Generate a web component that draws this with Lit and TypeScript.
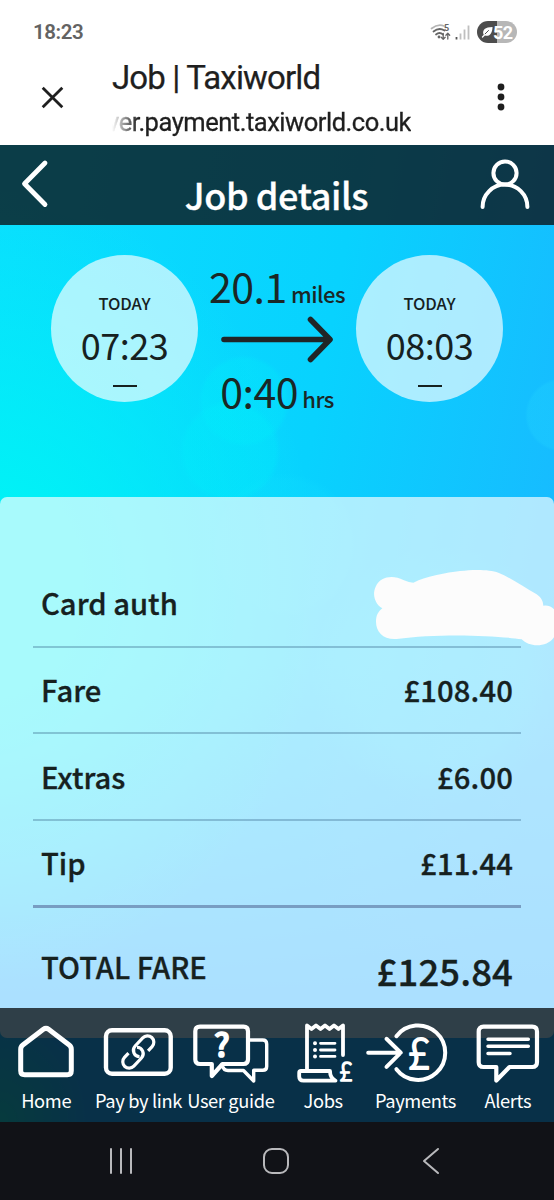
import { LitElement, html, css, svg } from "lit";
import { customElement } from "lit/decorators.js";

const NAV = [
  {
    label: "Home",
    icon: svg`<path stroke-width="5" d="M43.4 11.3Q46 9.4 48.6 11.3L69.2 27Q71.3 28.6 71.3 31.2V52.7Q71.3 56.7 67.3 56.7H24.7Q20.7 56.7 20.7 52.7V31.2Q20.7 28.6 22.8 27Z"/>`,
  },
  {
    label: "Pay by link",
    icon: svg`<rect x="14" y="12.3" width="64.7" height="43.4" rx="6" stroke-width="4.4"/>
      <g transform="translate(46.3 34) rotate(-47)" stroke-width="3.2" stroke-linecap="butt">
        <path d="M7.5 6.4H13.4A6.4 6.4 0 0 0 13.4 -6.4H2.2A6.4 6.4 0 0 0 -2.6 4.2"/>
        <path transform="rotate(180)" d="M7.5 6.4H13.4A6.4 6.4 0 0 0 13.4 -6.4H2.2A6.4 6.4 0 0 0 -2.6 4.2"/>
      </g>`,
  },
  {
    label: "User guide",
    icon: svg`<path stroke-width="4.2" d="M15 8.7H58.5Q63 8.7 63 13.2V41.5Q63 46 58.5 46H37.5L26.8 58V46H15Q10.3 46 10.3 41.5V13.2Q10.3 8.7 15 8.7Z"/>
      <path stroke-width="3.4" d="M65 22H77.7Q81.7 22 81.7 26V48.5Q81.7 52.3 77.7 52.3H68.7V63L58.5 52.5H43Q38.5 52.5 37 47"/>
      <text x="36.8" y="38.9" font-size="32" font-weight="500" stroke-width="1.6">?</text>`,
  },
  {
    label: "Jobs",
    icon: svg`<path stroke-width="3.8" d="M30 52V7.5L34.5 11L39 7.5L43.5 11L48 7.5L52.5 11L57 7.5L61.5 11L66 7.5V37"/>
      <path stroke-width="3.8" d="M24 53H53Q53 60 58.5 62.6H26.5Q22.2 62.6 22.2 58.5V54.8Q22.2 53 24 53Z"/>
      <path stroke-width="2.8" d="M43.5 25.3H58M43.5 32H58M43.5 38.4H58"/>
      <path stroke-width="4" d="M38 25.3h.01M38 32h.01M38 38.4h.01"/>
      <text x="69" y="62.6" font-size="26" font-weight="300" stroke-width="1.3">£</text>`,
  },
  {
    label: "Payments",
    icon: svg`<path stroke-width="4" d="M-.8 34.7H31.5M17.5 20.8L31.8 34.7L17.5 48.8"/>
      <path stroke-width="4" d="M27.4 18.2A27.2 27.2 0 1 1 27.4 51.2"/>
      <text x="50" y="51.2" font-size="43" font-weight="300" stroke-width="1.8">£</text>`,
  },
  {
    label: "Alerts",
    icon: svg`<path stroke-width="4.2" d="M21.5 8.7H70.2Q75 8.7 75 13.5V44.3Q75 49 70.2 49H47.5L34.3 62.5V49H21.5Q16.7 49 16.7 44.3V13.5Q16.7 8.7 21.5 8.7Z"/>
      <path stroke-width="3.5" d="M26 21.3H66.3M26 28.3H66.3M26 35.4H48"/>`,
  },
];

const ROWS = [
  ["Card auth", ""],
  ["Fare", "£108.40"],
  ["Extras", "£6.00"],
  ["Tip", "£11.44"],
];

@customElement("app-root")
export class AppRoot extends LitElement {
  static styles = css`
    :host {
      display: block;
      width: 554px;
      height: 1200px;
      overflow: hidden;
      font-family: "Noto Sans CJK JP", "Noto Sans", sans-serif;
      color: #16211f;
    }
    * { box-sizing: border-box; }
    svg { display: block; overflow: visible; fill: none; stroke-linecap: round; stroke-linejoin: round; }
    .screen { display: flex; flex-direction: column; height: 1200px; }

    .browser { flex: none; height: 144.5px; background: #fff; font-family: Roboto, sans-serif; }
    .status { height: 64px; padding: 0 37px 0 33px; display: flex; align-items: center; }
    .clock { flex: 1; font-size: 20.5px; font-weight: 600; color: #636363; letter-spacing: -0.4px; }
    .signals { width: 42px; height: 22px; margin-right: 5px; }
    .signals text { font: 700 9px Roboto, sans-serif; fill: #666; stroke: none; }
    .battery {
      width: 40px; height: 22px; border-radius: 11px; display: flex; align-items: center;
      background: linear-gradient(90deg, #4d4d4d 51%, #b7b7b7 51%); color: #fff;
      font-size: 18px; font-weight: 700; letter-spacing: -0.6px; padding-left: 5px;
    }
    .tabbar { height: 80px; display: flex; padding-left: 42px; }
    .close { width: 21px; height: 21px; margin-top: 23px; }
    .titles { flex: 1; padding-left: 49px; color: #1f1f1f; }
    .title { font-size: 33px; line-height: 36px; height: 36px; margin-top: -4px; letter-spacing: -0.85px; white-space: nowrap; -webkit-text-stroke: 0.25px; }
    .url {
      width: 299px; display: flex; justify-content: flex-end; white-space: nowrap;
      font-size: 25.5px; line-height: 30px; margin-top: 11px; letter-spacing: -0.48px; -webkit-text-stroke: 0.3px;
      mask-image: linear-gradient(90deg, transparent, #000 26px);
      -webkit-mask-image: linear-gradient(90deg, transparent, #000 26px);
    }
    .dots { width: 8px; height: 28px; margin: 19px 49px 0 0; fill: #1f1f1f; }

    .app {
      position: relative; flex: none; height: 977px; overflow: hidden; display: flex; flex-direction: column;
      background:
        radial-gradient(circle at 244px 256px, rgba(0,238,250,.28) 41px, transparent 46px),
        radial-gradient(circle at 230px 306px, rgba(0,238,250,.3) 45px, transparent 51px),
        radial-gradient(circle at 562px 270px, rgba(40,220,255,.22) 34px, transparent 37px),
        radial-gradient(circle at 285px 400px, rgba(20,225,255,.16) 64px, transparent 72px),
        radial-gradient(circle at 440px 530px, rgba(20,230,255,.22) 84px, transparent 130px),
        radial-gradient(ellipse 90px 110px at 0 977px, rgba(0,225,190,.7), transparent),
        radial-gradient(ellipse 340px 400px at -20px 440px, rgba(0,242,246,.95) 25%, rgba(0,242,246,0)),
        linear-gradient(180deg, transparent 520px, #0aa3ff 860px),
        linear-gradient(100deg, #0adeff 0%, #08d2fe 50%, #18baff 88%);
    }
    .head { flex: none; height: 80px; background: rgba(12,10,14,.76); display: flex; justify-content: space-between; padding: 15px 25px 0 22px; }
    .head svg { stroke: #fff; }
    .back { width: 26px; height: 50px; }
    .user { width: 50px; height: 52px; }
    .head h1 { margin: 12px 0 0 26px; font-size: 36px; line-height: 44px; height: 44px; font-weight: 500; color: #fff; letter-spacing: -0.4px; white-space: nowrap; -webkit-text-stroke: 0.3px; }
    .route { flex: none; height: 272px; padding: 30px 51px 0; display: flex; }
    .stop { width: 147px; height: 147px; border-radius: 50%; background: rgba(255,255,255,.66); display: flex; flex-direction: column; align-items: center; }
    .day { margin-top: 38px; font-size: 16.5px; line-height: 20px; font-weight: 500; letter-spacing: -0.1px; }
    .time { margin-top: 8.5px; font-size: 36px; line-height: 46px; letter-spacing: -0.5px; }
    .dash { width: 24px; height: 2px; background: #16211f; margin-top: 17.5px; }
    .leg { flex: 1; display: flex; flex-direction: column; align-items: center; color: #1a2726; white-space: nowrap; }
    .dist, .dur { font-size: 41px; line-height: 50px; height: 50px; letter-spacing: -0.4px; }
    .dist { margin-top: 5.5px; }
    .dur { margin-top: 4px; }
    .unit { font-size: 22px; font-weight: 500; margin-left: 4px; letter-spacing: -0.5px; }
    .arrow { width: 112px; height: 44px; margin-top: 6.5px; stroke: #202527; stroke-width: 5.6; }

    .card { flex: none; height: 541px; border-radius: 7px; background: rgba(255,255,255,.66); padding: 64.5px 33px 0; }
    .row { position: relative; height: 86.7px; display: flex; align-items: center; justify-content: space-between; padding: 0 8px; border-bottom: 2px solid rgba(50,95,130,.33); font-size: 29.2px; line-height: 40px; font-weight: 500; -webkit-text-stroke: 0.3px; }
    .row span { margin-top: -2px; }
    .amount { letter-spacing: 0.15px; }
    .row.last { border-bottom: 3px solid #789dc2; }
    .scribble { position: absolute; left: 327px; top: -1px; width: 194px; height: 100px; fill: #fcfcfc; z-index: 1; }
    .total { display: flex; justify-content: space-between; padding: 36px 8px 0; font-weight: 500; font-size: 29.2px; line-height: 44px; -webkit-text-stroke: 0.3px; }
    .sum { font-size: 36.5px; padding-top: 5px; letter-spacing: 0.1px; }

    .nav { position: absolute; left: 0; right: 0; bottom: 0; height: 114px; background: rgba(8,12,15,.76); display: grid; grid-template-columns: repeat(6, 1fr); z-index: 2; }
    .item { display: flex; flex-direction: column; align-items: center; color: #fff; font-size: 18.3px; line-height: 24px; letter-spacing: -0.35px; white-space: nowrap; min-width: 0; }
    .item svg { width: 92.33px; height: 68px; margin: 10.5px 0 2px; stroke: #fff; }
    .item text { fill: #fff; text-anchor: middle; letter-spacing: 0; }

    .system { flex: 1; background: #111217; display: flex; justify-content: space-between; align-items: center; padding: 0 115px 0 110px; }
    .system svg { stroke: #b9b9bc; stroke-width: 2; }
    .home { margin-right: 4px; }
  `;

  private stop(time: string) {
    return html`<div class="stop">
      <div class="day">TODAY</div>
      <div class="time">${time}</div>
      <div class="dash"></div>
    </div>`;
  }

  render() {
    return html`<div class="screen">
      <div class="browser">
        <div class="status">
          <span class="clock">18:23</span>
          <svg class="signals" viewBox="0 0 42 22">
            <path d="M1.5 7.5Q8 2.5 14 5" stroke="#b5b5b5" stroke-width="1.7"/>
            <path d="M3.5 10.5Q9 6 14.5 9.5M6 13.5Q9.5 10.5 13 13.5" stroke="#666" stroke-width="1.8"/>
            <circle cx="9" cy="16" r="1.4" fill="#666"/>
            <text x="14" y="10">5</text>
            <path d="M13.2 12.5V18M11.2 16.2L13.2 18.2L15.2 16.2M17.8 18V12.5M15.9 14.2L17.8 12.3L19.7 14.2" stroke="#666" stroke-width="1.3"/>
            <path d="M26.5 16V18.5" stroke="#555" stroke-width="1.8" stroke-linecap="butt"/>
            <path d="M30.5 12.5V18.5M34.5 8.5V18.5M38.5 4.5V18.5" stroke="#bfbfbf" stroke-width="1.8" stroke-linecap="butt"/>
          </svg>
          <div class="battery">
            <svg width="11" height="12" viewBox="0 0 11 12"><path d="M1.5 8.5C0 4 3 1 10.5 1C10.5 7 7.5 11 3 9.5Z" fill="#fff"/><path d="M6.5 4.5L3 8" stroke="#4d4d4d"/><path d="M2.5 9L.5 11" stroke="#fff" stroke-width="1.3"/></svg>52
          </div>
        </div>
        <div class="tabbar">
          <svg class="close" viewBox="0 0 21 21" stroke="#1f1f1f" stroke-width="2.8"><path stroke-linecap="butt" d="M.7 .7L20.3 20.3M20.3 .7L.7 20.3"/></svg>
          <div class="titles">
            <div class="title">Job | Taxiworld</div>
            <div class="url">ver.payment.taxiworld.co.uk</div>
          </div>
          <svg class="dots" viewBox="0 0 8 28"><circle cx="4" cy="4" r="3.4"/><circle cx="4" cy="14" r="3.4"/><circle cx="4" cy="24" r="3.4"/></svg>
        </div>
      </div>

      <div class="app">
        <div class="head">
          <svg class="back" viewBox="0 0 26 50" stroke-width="4.8"><path d="M23 3L2.5 23.7L23 44.5"/></svg>
          <h1>Job details</h1>
          <svg class="user" viewBox="0 0 50 52" stroke-width="4"><circle cx="26" cy="13" r="11.6"/><path d="M3.6 47A22.4 22.4 0 0 1 48.4 47"/></svg>
        </div>
        <div class="route">
          ${this.stop("07:23")}
          <div class="leg">
            <div class="dist">20.1<span class="unit">miles</span></div>
            <svg class="arrow" viewBox="0 0 112 44"><path d="M3 22.5H108M89.5 2.5L109 22.5L89.5 42.5"/></svg>
            <div class="dur">0:40<span class="unit">hrs</span></div>
          </div>
          ${this.stop("08:03")}
        </div>
        <div class="card">
          ${ROWS.map(
            ([label, amount], i) => html`<div class="row ${i === ROWS.length - 1 ? "last" : ""}">
              <span>${label}</span>
              ${amount
                ? html`<span class="amount">${amount}</span>`
                : html`<svg class="scribble" viewBox="0 0 582 300"><path d="M160 68C200 48 260 38 300 33C340 28 390 28 415 38C450 52 490 80 530 103Q550 117 550 137Q582 134 590 165V215C575 265 510 265 485 238C400 225 230 220 110 237C70 240 48 215 48 185C48 165 55 155 67 145C42 130 37 100 47 80C62 48 100 45 130 60Q148 68 160 68Z"/></svg>`}
            </div>`
          )}
          <div class="total"><span>TOTAL FARE</span><span class="sum">£125.84</span></div>
        </div>
        <div class="nav">
          ${NAV.map(
            (n) => html`<div class="item"><svg viewBox="0 0 92.33 68">${n.icon}</svg><span>${n.label}</span></div>`
          )}
        </div>
      </div>

      <div class="system">
        <svg width="22" height="26" viewBox="0 0 22 26"><path d="M1 1V25M11 1V25M21 1V25"/></svg>
        <svg class="home" width="28" height="28" viewBox="0 0 28 28"><rect x="2" y="2" width="24" height="24" rx="8"/></svg>
        <svg width="16" height="26" viewBox="0 0 16 26"><path d="M15 1L1 13L15 25"/></svg>
      </div>
    </div>`;
  }
}
